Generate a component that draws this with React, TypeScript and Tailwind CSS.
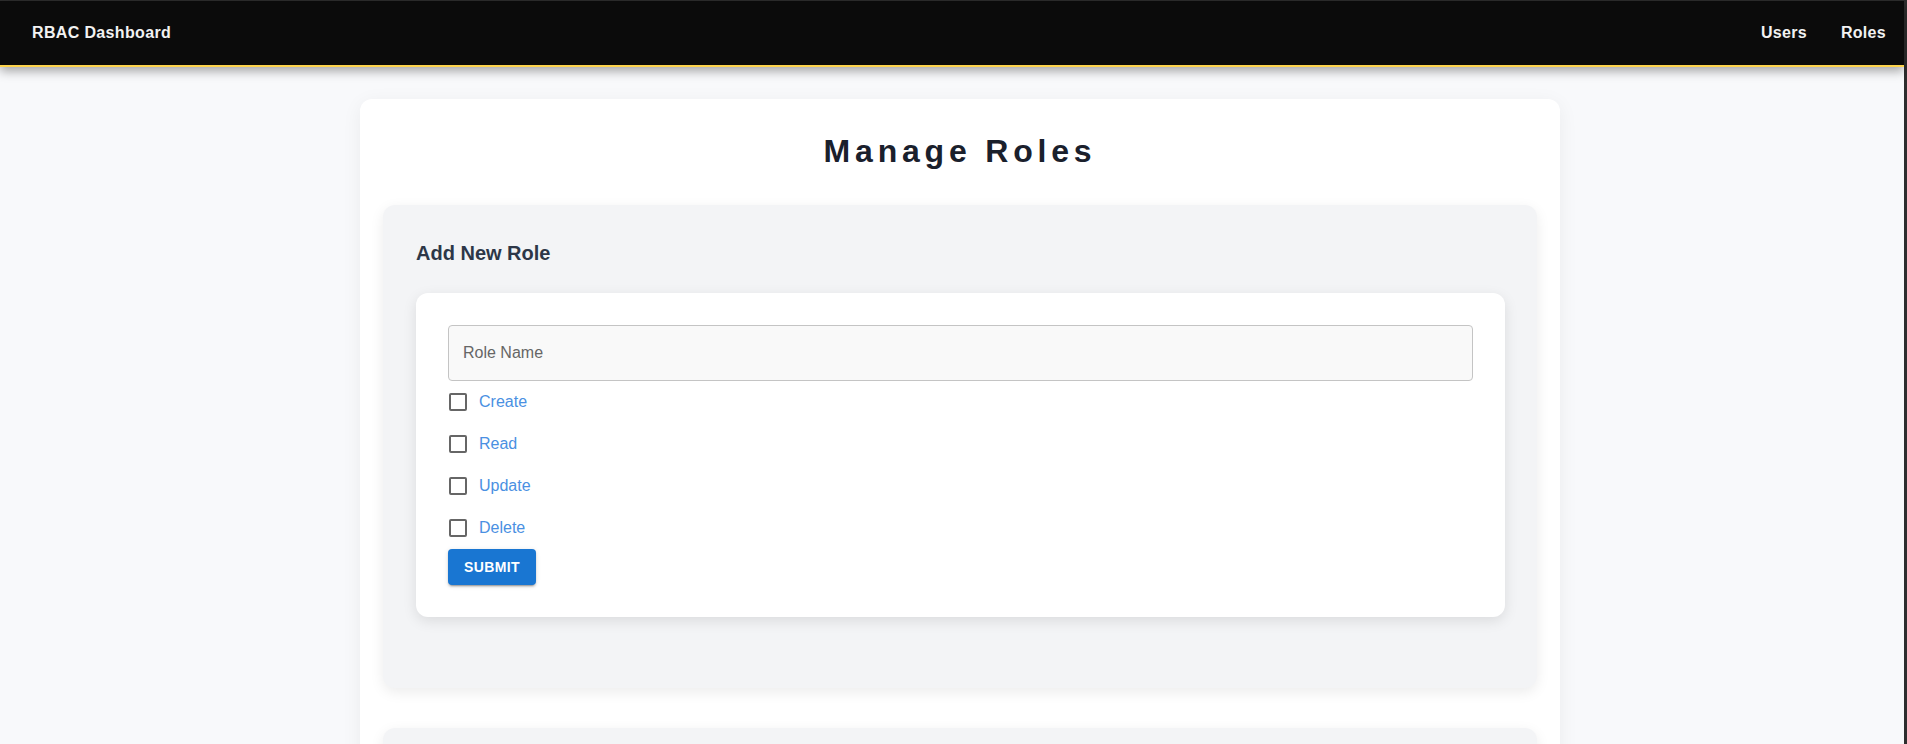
import { useState } from 'react';

const permissions = ['Create', 'Read', 'Update', 'Delete'];

const NavBar = () => (
  <header className="relative z-10 h-[66px] bg-[#0b0b0b] border-b-2 border-[#fcd34d] shadow-[0_4px_10px_rgba(0,0,0,0.35)] flex items-center justify-between pl-8 pr-[18px]">
    <span className="text-[16px] font-bold tracking-[0.35px] text-[#f2f2f2]">RBAC Dashboard</span>
    <nav className="flex items-center gap-[34px]">
      <a className="text-[16px] font-bold tracking-[0.3px] text-[#f2f2f2]">Users</a>
      <a className="text-[16px] font-bold tracking-[0.3px] text-[#f2f2f2]">Roles</a>
    </nav>
  </header>
);

const AddRoleForm = () => {
  const [name, setName] = useState('');
  const [checked, setChecked] = useState<string[]>([]);

  const toggle = (p: string) =>
    setChecked((prev) => (prev.includes(p) ? prev.filter((x) => x !== p) : [...prev, p]));

  return (
    <div className="rounded-xl bg-white shadow-[0_4px_14px_rgba(0,0,0,0.1)] p-8">
      <input
        value={name}
        onChange={(e) => setName(e.target.value)}
        placeholder="Role Name"
        className="block w-full h-14 rounded-[4px] border border-[#c4c4c4] bg-[#f9f9f9] px-[14px] text-[16px] text-[#222] placeholder:text-[#666] outline-none"
      />
      {permissions.map((p) => (
        <label key={p} className="flex h-[42px] items-center gap-3 cursor-pointer">
          <span
            onClick={() => toggle(p)}
            className={
              checked.includes(p)
                ? 'ml-px w-[18px] h-[18px] rounded-[2px] border-2 border-[#1976d2] bg-[#1976d2]'
                : 'ml-px w-[18px] h-[18px] rounded-[2px] border-2 border-[#666]'
            }
          />
          <span className="text-[16px] text-[#4a90e2]">{p}</span>
        </label>
      ))}
      <button
        type="button"
        className="h-9 rounded-[4px] bg-[#1976d2] px-4 text-[14px] font-bold uppercase tracking-[0.4px] text-white shadow-[0_3px_1px_-2px_rgba(0,0,0,0.2),0_2px_2px_0_rgba(0,0,0,0.14),0_1px_5px_0_rgba(0,0,0,0.12)]"
      >
        Submit
      </button>
    </div>
  );
};

export default function App() {
  return (
    <div className="min-h-screen bg-[#f8f9fb] border-t border-r-[3px] border-[#2e2e2e] font-['Liberation_Sans',Arial,sans-serif]">
      <NavBar />
      <main className="pt-8 pb-10">
        <div className="ml-[360px] w-[1200px] rounded-xl bg-white shadow-[0_4px_20px_rgba(0,0,0,0.06)] px-[23px] pt-9 pb-8">
          <h1 className="mb-[38px] text-center text-[32px] leading-8 font-bold tracking-[0.15em] text-[#1a202c]">
            Manage Roles
          </h1>
          <div className="flex flex-col gap-10">
            <section className="rounded-xl bg-[#f3f4f6] shadow-[0_4px_14px_rgba(0,0,0,0.08)] pl-[33px] pr-8 pt-8 pb-[71px]">
              <h2 className="mb-6 text-[20px] leading-8 font-bold text-[#2d3748]">Add New Role</h2>
              <AddRoleForm />
            </section>
            <section className="rounded-xl bg-[#f3f4f6] shadow-[0_4px_14px_rgba(0,0,0,0.08)] pl-[33px] pr-8 pt-8 pb-8">
              <h2 className="mb-6 text-[20px] leading-8 font-bold text-[#2d3748]">Existing Roles</h2>
              <div className="rounded-xl bg-white shadow-[0_4px_14px_rgba(0,0,0,0.1)] p-8 text-[16px] text-[#555]">
                No roles yet.
              </div>
            </section>
          </div>
        </div>
      </main>
    </div>
  );
}
